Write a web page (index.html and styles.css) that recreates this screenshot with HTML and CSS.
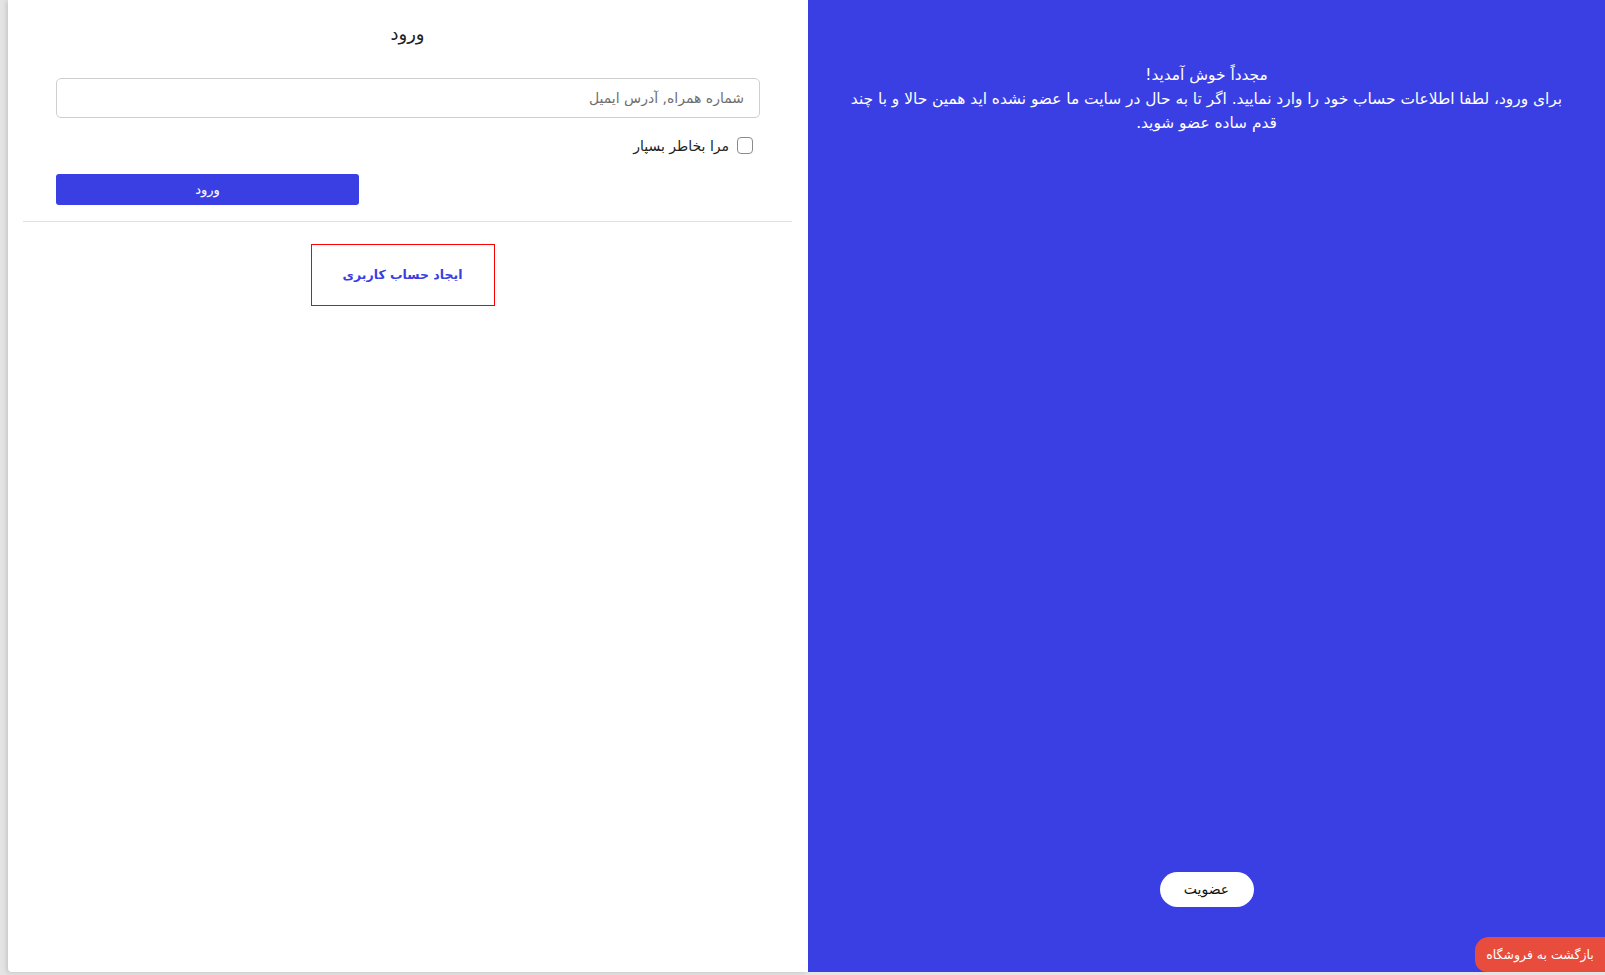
FILE: index.html
```html
<!DOCTYPE html>
<html lang="fa" dir="rtl">

<head>
    <meta charset="UTF-8">
    <meta name="viewport" content="width=device-width, initial-scale=1.0">
    <title>ورود</title>
    <link rel="stylesheet" href="styles.css">
</head>

<body>
    <div class="page">
        <section class="welcome">
            <div class="welcome-text">
                <p>مجدداً خوش آمدید!</p>
                <p>برای ورود، لطفا اطلاعات حساب خود را وارد نمایید. اگر تا به حال در سایت ما عضو نشده اید همین حالا و با چند قدم ساده عضو شوید.</p>
            </div>
            <a href="#" class="join-button">عضویت</a>
        </section>

        <section class="login">
            <h1 class="login-title">ورود</h1>
            <form class="login-form">
                <input type="text" class="login-input" placeholder="شماره همراه, آدرس ایمیل">
                <label class="remember">
                    <input type="checkbox" class="remember-box">
                    <span>مرا بخاطر بسپار</span>
                </label>
                <button type="submit" class="login-button">ورود</button>
            </form>
            <hr class="divider">
            <a href="#" class="register-link">ایجاد حساب کاربری</a>
        </section>
    </div>

    <a href="#" class="back-to-shop">بازگشت به فروشگاه</a>
</body>

</html>
```

FILE: styles.css
```css
body {
    margin: 0;
    height: 100vh;
    background: #e4e4e4;
    font-family: "DejaVu Sans", sans-serif;
    overflow: hidden;
}

.page {
    display: flex;
    height: calc(100vh - 3px);
    padding-left: 8px;
}

/* ستون آبی */
.welcome {
    flex: 0 0 797px;
    background: #3a3fe3;
    color: #fff;
    display: flex;
    flex-direction: column;
    align-items: center;
    padding: 63px 34px 65px;
    box-sizing: border-box;
}

.welcome-text {
    text-align: center;
    font-size: 15.4px;
    line-height: 24px;
}

.welcome-text p {
    margin: 0;
}

.join-button {
    margin-top: auto;
    width: 94px;
    height: 35px;
    line-height: 35px;
    border-radius: 18px;
    background: #fff;
    color: #111;
    text-align: center;
    text-decoration: none;
    font-size: 14px;
}

/* ستون سفید */
.login {
    flex: 1;
    background: #fff;
    border-bottom-left-radius: 4px;
    box-shadow: -2px 1px 4px rgba(0, 0, 0, 0.12);
    padding: 0 16px 0 15px;
    display: flex;
    flex-direction: column;
}

.login-title {
    margin: 22px 0 0;
    font-size: 18px;
    font-weight: normal;
    line-height: 24px;
    text-align: center;
    color: #222;
}

.login-form {
    display: flex;
    flex-direction: column;
    padding: 0 32px 0 33px;
    margin-top: 32px;
}

.login-input {
    height: 40px;
    border: 1px solid #cfcfcf;
    border-radius: 5px;
    padding: 0 15px;
    font-family: inherit;
    font-size: 14px;
    box-sizing: border-box;
}

.login-input::placeholder {
    color: #6f6f6f;
}

.remember {
    display: flex;
    align-items: center;
    gap: 8px;
    margin: 19px 7px 0 0;
    font-size: 14px;
    color: #222;
}

.remember-box {
    appearance: none;
    width: 16px;
    height: 17px;
    margin: 0;
    border: 1px solid #8a8a8a;
    border-radius: 4px;
    background: #fff;
}

.login-button {
    align-self: flex-end;
    width: 303px;
    height: 31px;
    margin-top: 20px;
    border: none;
    border-radius: 3px;
    background: #3a3fe3;
    color: #fff;
    font-family: inherit;
    font-size: 13px;
    cursor: pointer;
}

.divider {
    margin: 16px 0 0;
    border: none;
    border-top: 1px solid #e2e2e2;
}

.register-link {
    align-self: center;
    width: 184px;
    height: 62px;
    line-height: 60px;
    margin: 22px 10px 0 0;
    border: 1px solid #f00;
    box-sizing: border-box;
    text-align: center;
    color: #3a3fe3;
    font-weight: bold;
    font-size: 12.5px;
    text-decoration: none;
}

.back-to-shop {
    position: fixed;
    right: 0;
    bottom: 3px;
    width: 130px;
    height: 35px;
    line-height: 35px;
    border-radius: 14px 0 0 12px;
    background: #e84c3d;
    color: #fff;
    text-align: center;
    font-size: 12.5px;
    text-decoration: none;
}
```
